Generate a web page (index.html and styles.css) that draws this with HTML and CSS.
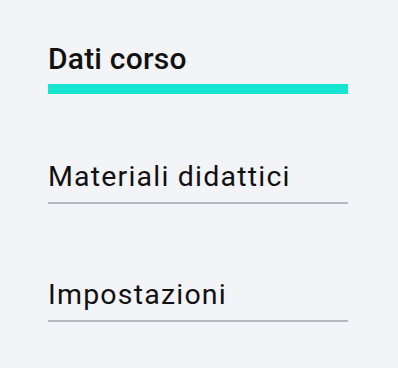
FILE: index.html
```html
<!DOCTYPE html>
<html lang="it">
<head>
<meta charset="utf-8">
<title>Tabs</title>
<link rel="stylesheet" href="styles.css">
</head>
<body>
<nav class="tabs">
  <a class="tab tab--active" href="#">Dati corso</a>
  <a class="tab" href="#">Materiali didattici</a>
  <a class="tab" href="#">Impostazioni</a>
</nav>
</body>
</html>
```

FILE: styles.css
```css
html, body {
  margin: 0;
  padding: 0;
  background: #f3f4f8;
}

.tabs {
  display: flex;
  flex-direction: column;
  gap: 74px;
  width: 300px;
  padding: 42px 0 0 48px;
  font-family: Roboto, "Liberation Sans", sans-serif;
}

.tab {
  display: block;
  font-size: 28.5px;
  line-height: 34px;
  letter-spacing: 1.2px;
  color: #111111;
  text-decoration: none;
  padding-bottom: 8px;
  border-bottom: 2px solid #b6b8be;
}

.tab--active {
  font-size: 30px;
  font-weight: 500;
  letter-spacing: 0.2px;
  border-bottom: 10px solid #16e6d1;
  margin-bottom: -8px;
}
```
